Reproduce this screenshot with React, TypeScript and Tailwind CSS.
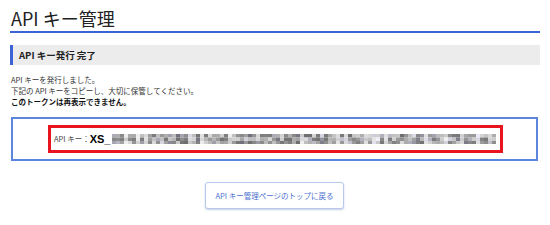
import React from 'react';

const FONT = { fontFamily: '"Noto Sans CJK JP", "Noto Sans", "Liberation Sans", sans-serif' };

// pixelated (mosaic) key
function MaskedKey() {
  const cols = 96;
  const rows = 3;
  const rects: React.ReactNode[] = [];
  let seed = 7;
  const rnd = () => {
    seed = (seed * 9301 + 49297) % 233280;
    return seed / 233280;
  };
  for (let c = 0; c < cols; c++) {
    const gap = rnd() < 0.12;
    for (let r = 0; r < rows; r++) {
      const v = gap ? 200 + Math.floor(rnd() * 40) : 110 + Math.floor(rnd() * 110);
      const tint = rnd() < 0.15 ? 12 : 0;
      rects.push(
        <rect key={`${c}-${r}`} x={c * 4} y={r * 3.5} width={4} height={3.5} fill={`rgb(${v},${v},${v + tint})`} />
      );
    }
  }
  return (
    <svg width={384} height={10.5} className="block">
      {rects}
    </svg>
  );
}

export default function App() {
  return (
    <div className="w-[550px] h-[225px] bg-white px-[10px] text-[#222]" style={FONT}>
      <h1 className="pt-[6px] pb-[1px] pl-[1px] text-[18px] leading-[24px] font-normal border-b-2 border-[#3b63d6]">
        API キー管理
      </h1>

      <div className="mt-[12px] h-[20px] flex items-center bg-[#ececec] border-l-[3px] border-[#3b63d6] pl-[6px]">
        <span className="text-[9.5px] font-bold text-[#222]">API キー発行 完了</span>
      </div>

      <div className="mt-[9px] pl-[1px] text-[7.5px] leading-[11px] text-[#333]">
        <p>API キーを発行しました。</p>
        <p>下記の API キーをコピーし、大切に保管してください。</p>
        <p className="font-bold text-[#111]">このトークンは再表示できません。</p>
      </div>

      <div className="mt-[10px] ml-[1px] w-[527px] h-[44px] border-2 border-[#5c86dd] flex items-center">
        <div className="ml-[35px] w-[455px] h-[28px] border-[3px] border-[#e8141f] flex items-center pl-[3px]">
          <span className="text-[7.5px] text-[#444]">API キー：</span>
          <span className="text-[11px] font-bold text-black leading-none" style={{ fontFamily: '"Liberation Sans", sans-serif' }}>XS_</span>
          <div className="ml-[2px]">
            <MaskedKey />
          </div>
        </div>
      </div>

      <div className="mt-[21px] flex justify-center">
        <button className="ml-[-1px] w-[139px] h-[27px] rounded-[3px] border border-[#b9c8ea] bg-white shadow-[0_1px_2px_rgba(80,110,180,0.35)] text-[7.5px] text-[#4b6fcf]">
          API キー管理ページのトップに戻る
        </button>
      </div>
    </div>
  );
}
